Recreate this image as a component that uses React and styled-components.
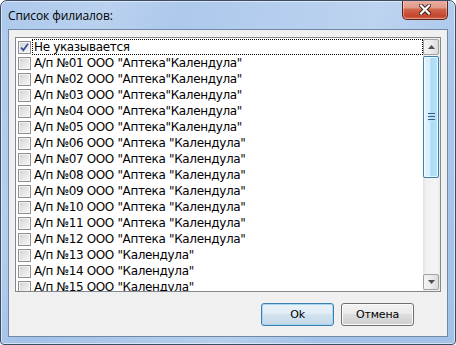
import React from 'react';
import styled, { createGlobalStyle } from 'styled-components';

const Global = createGlobalStyle`
  html, body { margin: 0; padding: 0; background: #ffffff; }
  body { width: 456px; height: 345px; overflow: hidden; }
`;

const Window = styled.div`
  width: 456px;
  height: 345px;
  box-sizing: border-box;
  border: 1px solid #3a4d63;
  border-radius: 7px 7px 4px 4px;
  background:
    linear-gradient(115deg, rgba(255,255,255,0) 0%, rgba(255,255,255,0.16) 18%, rgba(255,255,255,0) 30%, rgba(255,255,255,0.2) 62%, rgba(255,255,255,0) 78%),
    linear-gradient(180deg, #adc9ec 0%, #a3c2e8 100%);
  box-shadow: inset 0 0 0 1px rgba(255,255,255,0.55);
  display: flex;
  flex-direction: column;
  overflow: hidden;
`;

const TitleBar = styled.div`
  height: 28px;
  flex: none;
  display: flex;
  align-items: center;
  padding-left: 7px;
`;

const Title = styled.span`
  font-family: "Open Sans", "Noto Sans", sans-serif;
  font-size: 12px;
  color: #000;
  letter-spacing: -0.1px;
`;

const CloseButton = styled.div`
  margin-left: auto;
  margin-right: 7px;
  align-self: flex-start;
  margin-top: -1px;
  width: 46px;
  height: 20px;
  box-sizing: border-box;
  border: 1px solid #5c2418;
  border-top: none;
  border-radius: 0 0 5px 5px;
  background: linear-gradient(180deg, #eab0a3 0%, #e09a8a 40%, #d0644c 50%, #c3452b 85%, #d2684f 100%);
  box-shadow: inset 0 0 0 1px rgba(255,255,255,0.35);
  display: flex;
  align-items: center;
  justify-content: center;
`;

const Client = styled.div`
  flex: 1;
  margin: 0 7px 7px 7px;
  background: #f0f0f0;
  border: 1px solid #7088a5;
  display: flex;
  flex-direction: column;
  padding: 7px 6px 0 6px;
`;

const ListBox = styled.div`
  height: 255px;
  box-sizing: border-box;
  border: 1px solid #828790;
  background: #ffffff;
  display: flex;
  flex: none;
`;

const List = styled.div`
  flex: 1;
  overflow: hidden;
  display: flex;
  flex-direction: column;
  padding-top: 1px;
`;

const Row = styled.div`
  height: 16px;
  flex: none;
  display: flex;
  align-items: center;
  padding-left: 2px;
  gap: 1px;
`;

const Box = styled.div`
  width: 13px;
  height: 13px;
  box-sizing: border-box;
  border: 1px solid #8f8f8f;
  background: linear-gradient(135deg, #cfd0d2 0%, #e8e8e8 55%, #f7f7f7 100%);
  box-shadow: inset 0 0 0 1px #f4f4f4;
  flex: none;
  position: relative;
`;

const Check = styled.svg`
  position: absolute;
  left: 1px;
  top: 1px;
`;

const Label = styled.div`
  flex: 1;
  height: 16px;
  box-sizing: border-box;
  border: 1px dotted ${p => (p.$focused ? '#000' : 'transparent')};
  padding-left: 1px;
  font-family: "DejaVu Sans", "Liberation Sans", sans-serif;
  font-size: 12px;
  letter-spacing: -0.35px;
  line-height: 14px;
  color: #000;
  white-space: nowrap;
`;

const ScrollBar = styled.div`
  width: 17px;
  flex: none;
  background: linear-gradient(90deg, #e3e3e3 0%, #f1f1f1 20%, #f4f4f4 80%, #e8e8e8 100%);
  display: flex;
  flex-direction: column;
`;

const Arrow = styled.div`
  flex: none;
  box-sizing: border-box;
  margin: ${p => (p.$down ? '0 1px 1px 0' : '1px 1px 0 0')};
  height: 16px;
  border: 1px solid #a0a0a0;
  border-radius: 2px;
  background: linear-gradient(90deg, #f3f3f3 0%, #ebebeb 50%, #dbdbdb 100%);
  display: flex;
  align-items: center;
  justify-content: center;
`;

const Track = styled.div`
  flex: 1;
  display: flex;
  flex-direction: column;
  padding: 1px 1px 1px 0;
`;

const Thumb = styled.div`
  height: 122px;
  box-sizing: border-box;
  border: 1px solid #3c7fb1;
  border-radius: 2px;
  background: linear-gradient(90deg, #e3f4fc 0%, #d6effc 40%, #a9dbf6 50%, #b8e3f8 100%);
  box-shadow: inset 0 0 0 1px rgba(255,255,255,0.7);
  display: flex;
  align-items: center;
  justify-content: center;
`;

const Grip = styled.div`
  width: 7px;
  height: 8px;
  background: repeating-linear-gradient(180deg, #305f8a 0px, #305f8a 1px, #bfe4f8 1px, #bfe4f8 2px, transparent 2px, transparent 3px);
`;

const ButtonRow = styled.div`
  display: flex;
  justify-content: flex-end;
  gap: 7px;
  margin-top: 11px;
  padding-right: 27px;
`;

const Button = styled.div`
  width: ${p => p.$w}px;
  height: 23px;
  box-sizing: border-box;
  border: 1px solid ${p => (p.$default ? '#3c7fb1' : '#707070')};
  border-radius: 3px;
  background: ${p => (p.$default
    ? 'linear-gradient(180deg, #eaf2f8 0%, #e2edf6 45%, #d2e2ef 50%, #c5d8e8 100%)'
    : 'linear-gradient(180deg, #f2f2f2 0%, #ebebeb 45%, #dddddd 50%, #cfcfcf 100%)')};
  box-shadow: inset 0 0 0 1px ${p => (p.$default ? '#a6d6f3' : '#fbfbfb')};
  display: flex;
  align-items: center;
  justify-content: center;
  font-family: "DejaVu Sans", "Liberation Sans", sans-serif;
  font-size: 11px;
  letter-spacing: -0.2px;
  color: #000;
`;

const items = [
  'Не указывается',
  'А/п №01 ООО "Аптека"Календула"',
  'А/п №02 ООО "Аптека"Календула"',
  'А/п №03 ООО "Аптека"Календула"',
  'А/п №04 ООО "Аптека"Календула"',
  'А/п №05 ООО "Аптека"Календула"',
  'А/п №06 ООО "Аптека "Календула"',
  'А/п №07 ООО "Аптека "Календула"',
  'А/п №08 ООО "Аптека "Календула"',
  'А/п №09 ООО "Аптека "Календула"',
  'А/п №10 ООО "Аптека "Календула"',
  'А/п №11 ООО "Аптека "Календула"',
  'А/п №12 ООО "Аптека "Календула"',
  'А/п №13 ООО "Календула"',
  'А/п №14 ООО "Календула"',
  'А/п №15 ООО "Календула"',
];

export default function App() {
  return (
    <>
      <Global />
      <Window>
        <TitleBar>
          <Title>Список филиалов:</Title>
          <CloseButton>
            <svg width="12" height="11" viewBox="0 0 12 11">
              <path d="M2 1.5 L10 9.5 M10 1.5 L2 9.5" stroke="#3a1a14" strokeWidth="4" strokeLinecap="square" />
              <path d="M2 1.5 L10 9.5 M10 1.5 L2 9.5" stroke="#ffffff" strokeWidth="2.2" strokeLinecap="square" />
            </svg>
          </CloseButton>
        </TitleBar>
        <Client>
          <ListBox>
            <List>
              {items.map((t, i) => (
                <Row key={i}>
                  <Box>
                    {i === 0 && (
                      <Check width="9" height="9" viewBox="0 0 9 9">
                        <path d="M1 4.5 L3.3 7.2 L8 0.8" fill="none" stroke="#3d4fa0" strokeWidth="1.8" />
                      </Check>
                    )}
                  </Box>
                  <Label $focused={i === 0}>{t}</Label>
                </Row>
              ))}
            </List>
            <ScrollBar>
              <Arrow>
                <svg width="7" height="4" viewBox="0 0 7 4"><path d="M0 4 L3.5 0 L7 4 Z" fill="#4d4d4d" /></svg>
              </Arrow>
              <Track>
                <Thumb><Grip /></Thumb>
              </Track>
              <Arrow $down>
                <svg width="7" height="4" viewBox="0 0 7 4"><path d="M0 0 L3.5 4 L7 0 Z" fill="#4d4d4d" /></svg>
              </Arrow>
            </ScrollBar>
          </ListBox>
          <ButtonRow>
            <Button $default $w={73}>Ok</Button>
            <Button $w={73}>Отмена</Button>
          </ButtonRow>
        </Client>
      </Window>
    </>
  );
}
